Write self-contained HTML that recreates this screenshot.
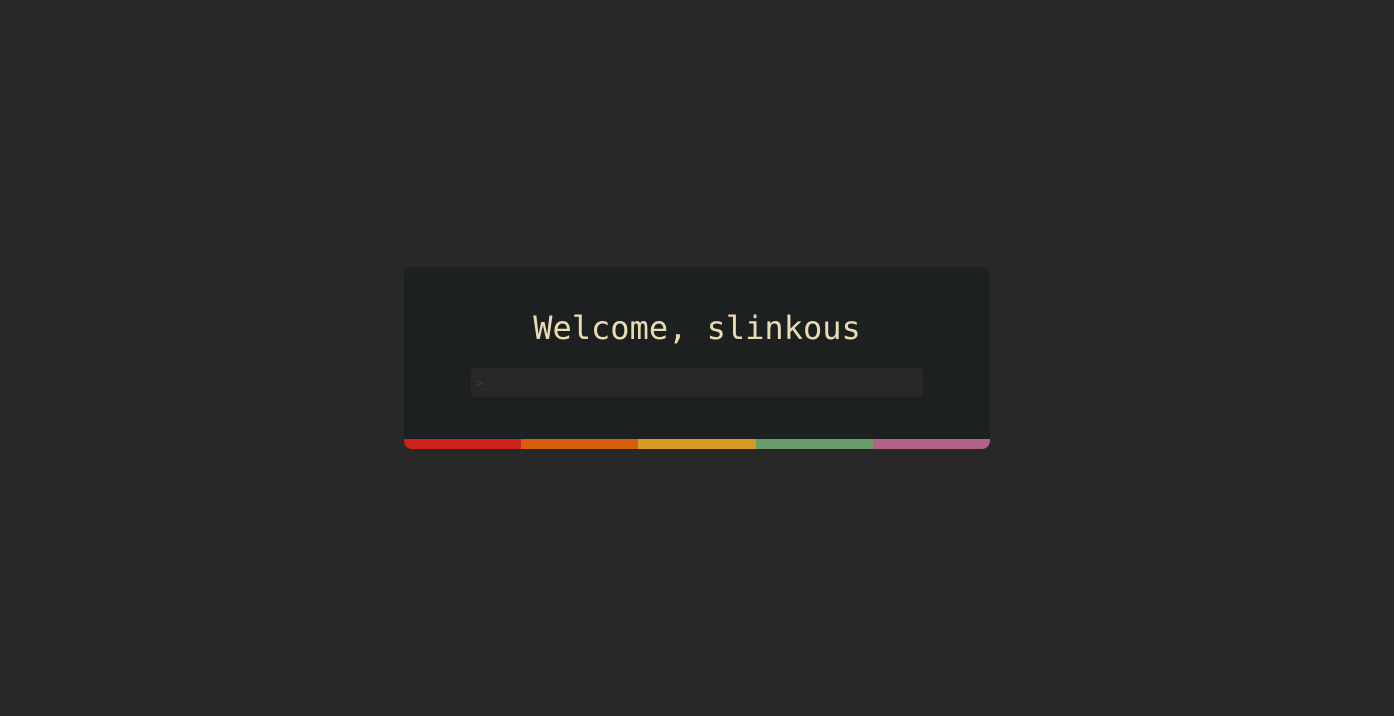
<!DOCTYPE html>
<html><head><style>
body{margin:0;background:#282828;width:1394px;height:716px;position:relative;overflow:hidden}
.card{position:absolute;left:404px;top:267px;width:586px;height:182px;background:#1d2021;border-radius:8px;overflow:hidden}
h1{position:absolute;left:0;right:0;top:306px;margin:0;text-align:center;font:32px "DejaVu Sans Mono",monospace;color:#ebdbb2;line-height:44px}
.in{position:absolute;left:471px;top:368px;width:452px;height:29px;background:#282828;border-radius:4px}
.in span{position:absolute;left:5px;top:8px;font:12px "DejaVu Sans Mono",monospace;color:#3c3c3c}
.bar{position:absolute;left:0;bottom:0;height:10px;width:100%;display:flex}
.bar div{flex:1}
</style></head><body>
<div class="card"><div class="bar"><div style="background:#cc241d"></div><div style="background:#d65d0e"></div><div style="background:#d79921"></div><div style="background:#689d6a"></div><div style="background:#b16286"></div></div></div>
<h1>Welcome, slinkous</h1>
<div class="in"><span>&gt;_</span></div>
</body></html>
